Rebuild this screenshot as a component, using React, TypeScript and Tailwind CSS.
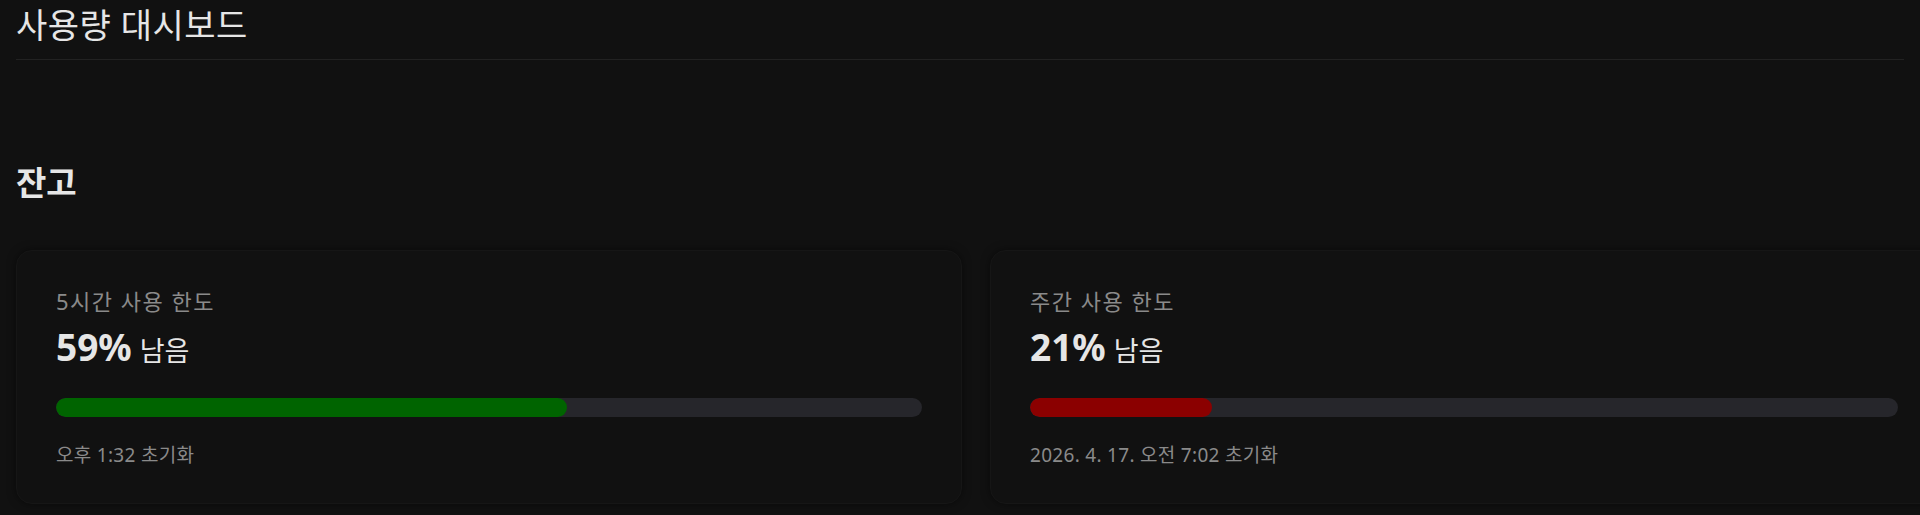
import React from "react";

const font = {
  fontFamily: '"Noto Sans", "Noto Sans CJK KR", sans-serif',
};

function Card({
  label,
  pct,
  color,
  reset,
}: {
  label: string;
  pct: number;
  color: string;
  reset: string;
}) {
  return (
    <div className="rounded-2xl border border-[#161616] bg-[#111111] px-[39px] pt-[35px] pb-[35px] shadow-[0_0_8px_rgba(0,0,0,0.5)]">
      <div className="text-[22px] leading-[30px] tracking-[1.5px] text-[#8a8a8a]">{label}</div>
      <div className="mt-[8px] flex items-baseline gap-[8px] text-[#e6e6e6]">
        <span className="text-[37px] font-bold leading-[46px]">{pct}%</span>
        <span className="text-[27px] leading-[34px]">남음</span>
      </div>
      <div className="mt-[28px] h-[19px] w-full overflow-hidden rounded-full bg-[#26262b]">
        <div
          className="h-full rounded-full"
          style={{ width: `${pct}%`, backgroundColor: color }}
        />
      </div>
      <div className="mt-[25px] text-[19px] leading-[26px] tracking-[0.3px] text-[#8a8a8a]">{reset}</div>
    </div>
  );
}

export default function App() {
  return (
    <div
      className="h-[515px] w-[1920px] overflow-hidden bg-[#111111] text-[#e6e6e6]"
      style={font}
    >
      <div className="mx-[16px] border-b border-[#222222] pt-[2px] pb-[11px]">
        <h1 className="text-[34px] font-normal leading-[46px] tracking-[0.5px] text-[#e6e6e6]">
          사용량 대시보드
        </h1>
      </div>
      <div className="px-[16px] pt-[102px]">
        <h2 className="text-[33px] font-bold leading-[42px] text-[#e6e6e6]">잔고</h2>
        <div className="mt-[46px] grid grid-cols-[946px_948px] gap-[28px]">
          <Card
            label="5시간 사용 한도"
            pct={59}
            color="#006400"
            reset="오후 1:32 초기화"
          />
          <Card
            label="주간 사용 한도"
            pct={21}
            color="#8b0000"
            reset="2026. 4. 17. 오전 7:02 초기화"
          />
        </div>
      </div>
    </div>
  );
}
